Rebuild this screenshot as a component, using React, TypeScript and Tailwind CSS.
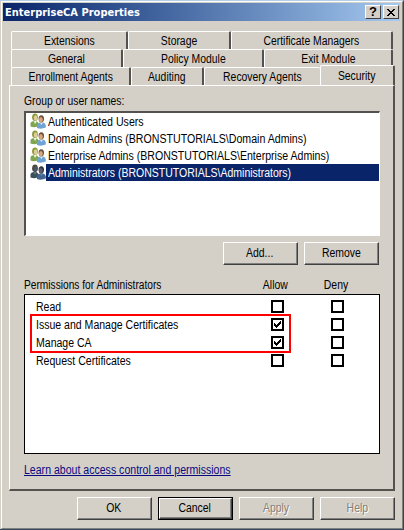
import type { ReactNode } from "react";
import { Fragment } from "react";

function Text({ children, className = "scale-x-[0.87]" }: { children: ReactNode; className?: string }) {
  return <span className={`inline-block whitespace-nowrap ${className}`}>{children}</span>;
}

function Tab({ children, className }: { children: ReactNode; className: string }) {
  return (
    <div className={`flex shrink-0 justify-center rounded-t-[2px] border-t border-l border-white bg-[#d4d0c8] ${className}`}>
      <Text className="scale-x-[0.865]">{children}</Text>
    </div>
  );
}

const edge = "border-r-2 border-r-[#54524f]";

function Button({ children, disabled, focus }: { children: ReactNode; disabled?: boolean; focus?: boolean }) {
  return (
    <button className={`flex h-[23px] w-[75px] shrink-0 ${focus ? "border border-black" : ""}`}>
      <span className="flex h-full w-full border border-t-white border-r-[#404040] border-b-[#404040] border-l-white">
        <span
          className={`flex h-full w-full items-center justify-center border-r border-b border-[#808080] ${
            disabled ? "text-[#848078] [text-shadow:1px_1px_0_#fff]" : ""
          }`}
        >
          <Text>{children}</Text>
        </span>
      </span>
    </button>
  );
}

function Users({ dark }: { dark?: boolean }) {
  const c = dark
    ? { h1: "#4a4a42", f1: "#4d5663", b1: "#38505c", h2: "#33333d", f2: "#5a6070", b2: "#41658f" }
    : { h1: "#8a9a3c", f1: "#e0cc98", b1: "#7fa64e", h2: "#68503c", f2: "#d9a878", b2: "#6fa3d6" };
  return (
    <svg className="h-4 w-4 shrink-0" viewBox="0 0 16 16">
      <path d="M0.5 13.5V10.5Q1 8 4 8H6.5L9 10.5V13Q5 15 0.5 13.5Z" fill={c.b1} />
      <path d="M3.5 8L5 11L7 8Z" fill={dark ? "#66727c" : "#e8f2dd"} />
      <ellipse cx="5" cy="4.3" rx="2.9" ry="3.8" fill={c.h1} />
      <ellipse cx="5.6" cy="5" rx="1.8" ry="2.8" fill={c.f1} />
      <path d="M7 15V12Q7.5 10 10 9.5H13Q15.5 10 15.8 12.5V14.5Q11 16.5 7 15Z" fill={c.b2} />
      <path d="M10 9.5L11.3 12L13 9.5Z" fill={dark ? "#7788a0" : "#edf5fc"} />
      <ellipse cx="11.3" cy="5.8" rx="2.7" ry="3.6" fill={c.h2} />
      <ellipse cx="10.9" cy="6.8" rx="1.9" ry="2.7" fill={c.f2} />
    </svg>
  );
}

function Check({ on }: { on?: boolean }) {
  return (
    <span className="mt-[3px] flex size-[13px] items-center justify-center border-2 border-black bg-white">
      {on && (
        <svg className="h-[7px] w-[7px]" viewBox="0 0 7 7" shapeRendering="crispEdges">
          <path d="M0 2h1v1h1v1h1v-1h1v-1h1v-1h1v-1h1v3h-1v1h-1v1h-1v1h-1v1h-1v-1h-1v-1h-1z" fill="#000" />
        </svg>
      )}
    </span>
  );
}

const users = [
  { name: "Authenticated Users", cls: "origin-left scale-x-[0.885]" },
  { name: "Domain Admins (BRONSTUTORIALS\\Domain Admins)", cls: "origin-left scale-x-[0.884]" },
  { name: "Enterprise Admins (BRONSTUTORIALS\\Enterprise Admins)", cls: "origin-left scale-x-[0.881]" },
  { name: "Administrators (BRONSTUTORIALS\\Administrators)", cls: "origin-left scale-x-[0.875]", selected: true },
];

const permissions = [
  { name: "Read", allow: false },
  { name: "Issue and Manage Certificates", allow: true },
  { name: "Manage CA", allow: true },
  { name: "Request Certificates", allow: false },
];

export default function App() {
  return (
    <div className="flex h-[530px] w-[404px] flex-col overflow-hidden border-t border-r border-b border-t-[#b5cfe9] border-r-[#404040] border-b-[#34495c] bg-[#d4d0c8] font-['Liberation_Sans',Arial,sans-serif] text-[12px] leading-[14px] text-black">
      <div className="ml-px flex flex-1 flex-col border border-t-white border-r-[#808080] border-b-[#808080] border-l-white pt-px pl-px">
        <header className="flex h-[18px] w-[397px] shrink-0 items-center bg-linear-to-r from-[#0a246a] to-[#a6caf0] pr-px pl-[2px]">
          <h1 className="flex-1 whitespace-nowrap pt-px font-['DejaVu_Sans_Condensed','DejaVu_Sans',sans-serif] text-[11px] font-bold text-white">
            EnterpriseCA Properties
          </h1>
          <div className="flex gap-[2px]">
            {["?", "x"].map((g) => (
              <span
                key={g}
                className="flex h-[14px] w-4 items-center justify-center border border-t-white border-r-[#404040] border-b-[#404040] border-l-white bg-[#d4d0c8] text-[13px] font-bold"
              >
                {g === "?" ? (
                  "?"
                ) : (
                  <svg className="h-[7px] w-2" viewBox="0 0 8 7" shapeRendering="crispEdges">
                    <path
                      d="M0 0h2v1h1v1h2v-1h1v-1h2v1h-1v1h-1v1h-1v1h1v1h1v1h1v1h-2v-1h-1v-1h-2v1h-1v1h-2v-1h1v-1h1v-1h1v-1h-1v-1h-1v-1h-1z"
                      fill="#000"
                    />
                  </svg>
                )}
              </span>
            ))}
          </div>
        </header>

        <nav className="mt-[10px] ml-2 flex w-[386px] shrink-0 flex-col">
          <div className="flex h-[18px]">
            <Tab className={`w-[117px] pt-[2px] ${edge}`}>Extensions</Tab>
            <Tab className={`w-[103px] pt-[2px] ${edge}`}>Storage</Tab>
            <Tab className={`w-[162px] pt-[2px] ${edge}`}>Certificate Managers</Tab>
          </div>
          <div className="flex h-[18px]">
            <Tab className={`w-[112px] pt-[2px] ${edge}`}>General</Tab>
            <Tab className={`w-[141px] pt-[2px] ${edge}`}>Policy Module</Tab>
            <Tab className={`w-[129px] pt-[2px] ${edge}`}>Exit Module</Tab>
          </div>
          <div className="flex h-[18px] items-end">
            <Tab className={`h-[18px] w-[120px] pt-[2px] ${edge}`}>Enrollment Agents</Tab>
            <Tab className={`h-[18px] w-[73px] pt-[2px] ${edge}`}>Auditing</Tab>
            <Tab className="h-[18px] w-[116px] pt-[2px]">Recovery Agents</Tab>
            <Tab className={`-mb-px h-[21px] w-[75px] pt-[3px] ${edge}`}>Security</Tab>
          </div>
        </nav>

        <main className="ml-[6px] flex h-[406px] w-[386px] shrink-0 flex-col border-t border-r-2 border-b-2 border-l border-t-white border-r-[#54524f] border-b-[#54524f] border-l-white pl-[14px]">
          <h2 className="mt-[8px] h-[17px]">
            <Text className="origin-left scale-x-[0.86]">Group or user names:</Text>
          </h2>
          <ul className="flex h-[125px] w-[356px] flex-col border-t-2 border-r border-b border-l-2 border-t-[#54524f] border-r-white border-b-white border-l-[#54524f] bg-white">
            {users.map((u) => (
              <li key={u.name} className="flex h-[17px] pl-1">
                <Users dark={u.selected} />
                <span className={`flex flex-1 items-center pl-[2px] ${u.selected ? "bg-[#0a246a] text-white" : ""}`}>
                  <Text className={u.cls}>{u.name}</Text>
                </span>
              </li>
            ))}
          </ul>
          <div className="mt-[6px] ml-[199px] flex gap-[6px]">
            <Button>Add...</Button>
            <Button>Remove</Button>
          </div>
          <div className="mt-[12px] mb-px grid h-4 grid-cols-[221px_61px_61px] items-center">
            <Text className="origin-left scale-x-[0.848]">Permissions for Administrators</Text>
            <span className="text-center">
              <Text>Allow</Text>
            </span>
            <span className="text-center">
              <Text>Deny</Text>
            </span>
          </div>
          <div className="relative h-[160px] w-[356px] border border-black bg-white pt-[2px]">
            <div className="grid auto-rows-[18px] grid-cols-[222px_61px_59px]">
              {permissions.map((p) => (
                <Fragment key={p.name}>
                  <span className="pt-[3px] pl-[11px]">
                    <Text className="origin-left scale-x-[0.878]">{p.name}</Text>
                  </span>
                  <span className="flex justify-center">
                    <Check on={p.allow} />
                  </span>
                  <span className="flex justify-center">
                    <Check />
                  </span>
                </Fragment>
              ))}
            </div>
            <div className="absolute top-[19px] left-[5px] h-[39px] w-[261px] border-2 border-[#f00]" />
          </div>
          <a className="mt-[9px] flex w-[207px] text-[#0a0a80]">
            <Text className="origin-left scale-x-[0.88] underline">Learn about access control and permissions</Text>
          </a>
        </main>

        <footer className="mt-[6px] ml-[74px] flex gap-[6px]">
          <Button>OK</Button>
          <Button focus>Cancel</Button>
          <Button disabled>Apply</Button>
          <Button disabled>Help</Button>
        </footer>
      </div>
    </div>
  );
}
